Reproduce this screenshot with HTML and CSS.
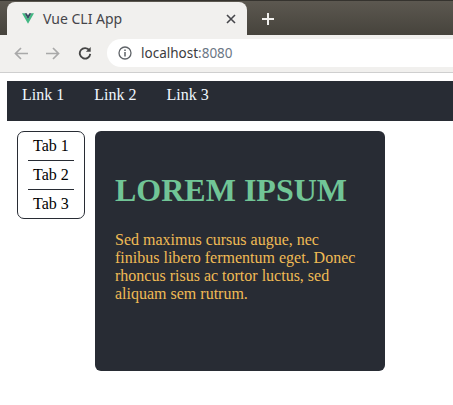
FILE: index.html
```html
<!DOCTYPE html>
<html>
<head>
    <title>Vue CLI App</title>
    <link rel="stylesheet" href="styles.css">
</head>
<body>
    <div class="browser-top">
        <div class="tab">
            <svg class="favicon" width="12" height="11" viewBox="0 0 14 12">
                <path d="M0 0H3L7 7L11 0H14L7 12Z" fill="#42b883"/>
                <path d="M3 0H5.5L7 2.6L8.5 0H11L7 7Z" fill="#35495e"/>
            </svg>
            <span class="tab-title">Vue CLI App</span>
            <svg class="tab-close" width="10" height="10" viewBox="0 0 10 10">
                <path d="M1 1L9 9M9 1L1 9" stroke="#45454a" stroke-width="1.6"/>
            </svg>
        </div>
        <svg class="new-tab" width="12" height="12" viewBox="0 0 12 12">
            <path d="M6 0V12M0 6H12" stroke="#f1f0ee" stroke-width="2"/>
        </svg>
    </div>
    <div class="toolbar">
        <svg class="nav-icon" width="14" height="13" viewBox="0 0 14 13">
            <path d="M14 6.5H1.5M7 1L1.5 6.5L7 12" fill="none" stroke="#a9a9a9" stroke-width="1.7"/>
        </svg>
        <svg class="nav-icon" width="14" height="13" viewBox="0 0 14 13">
            <path d="M0 6.5H12.5M7 1L12.5 6.5L7 12" fill="none" stroke="#a9a9a9" stroke-width="1.7"/>
        </svg>
        <svg class="nav-icon" width="14" height="14" viewBox="0 0 16 16">
            <path d="M13 5A6 6 0 1 0 14 9" fill="none" stroke="#454545" stroke-width="2.1"/>
            <path d="M14.5 1V6.5H9Z" fill="#454545"/>
        </svg>
        <div class="address">
            <svg width="14" height="14" viewBox="0 0 14 14">
                <circle cx="7" cy="7" r="6" fill="none" stroke="#5f6368" stroke-width="1.3"/>
                <path d="M7 6V10.5M7 3.4V5" stroke="#5f6368" stroke-width="1.5"/>
            </svg>
            <span class="host">localhost<span class="port">:8080</span></span>
        </div>
    </div>
    <div class="page">
        <nav class="navbar">
            <a>Link 1</a>
            <a>Link 2</a>
            <a>Link 3</a>
        </nav>
        <div class="content">
            <div class="tabs">
                <div class="tab-item">Tab 1</div>
                <div class="tab-item">Tab 2</div>
                <div class="tab-item">Tab 3</div>
            </div>
            <div class="card">
                <h1>LOREM IPSUM</h1>
                <p>Sed maximus cursus augue, nec finibus libero fermentum eget. Donec rhoncus risus ac tortor luctus, sed aliquam sem rutrum.</p>
            </div>
        </div>
    </div>
</body>
</html>
```

FILE: styles.css
```css
body {
    margin: 0;
    background: white;
    font-family: "Liberation Serif", serif;
    overflow: hidden;
}
.browser-top {
    height: 35px;
    box-sizing: border-box;
    padding-top: 1px;
    border-top: 1px solid #35332e;
    background: linear-gradient(#5c5850, #46433c);
    display: flex;
    align-items: flex-end;
}
.tab {
    width: 240px;
    height: 33px;
    margin-left: 7px;
    padding: 0 11px 0 15px;
    box-sizing: border-box;
    background: #f1f0ee;
    border-radius: 8px 8px 0 0;
    display: flex;
    align-items: center;
}
.favicon {
    margin-right: 9px;
}
.tab-title {
    flex: 1;
    font-family: "Noto Sans", sans-serif;
    font-size: 14px;
    color: #45454a;
}
.new-tab {
    margin: 0 0 10px 15px;
}
.toolbar {
    height: 38px;
    padding: 4px 0 5px 14px;
    box-sizing: border-box;
    background: #f1f0ee;
    border-bottom: 1px solid #cfcfcf;
    display: flex;
    align-items: center;
    gap: 18px;
}
.address {
    flex: 1;
    height: 28px;
    margin-left: -3px;
    padding-left: 11px;
    background: white;
    border-radius: 14px 0 0 14px;
    display: flex;
    align-items: center;
    gap: 9px;
}
.host {
    font-family: "Noto Sans", sans-serif;
    font-size: 13.5px;
    color: #3c3c40;
}
.port {
    color: #6b7785;
}
.page {
    padding: 8px 0 0 7px;
}
.navbar {
    height: 40px;
    padding: 3px 15px 0;
    box-sizing: border-box;
    background: #282c34;
    display: flex;
    gap: 30px;
    font-size: 16px;
    line-height: 22px;
}
.navbar a {
    color: #f0f8ff;
}
.content {
    display: flex;
    align-items: flex-start;
    gap: 10px;
    padding: 10px 0 0 10px;
}
.tabs {
    width: 68px;
    box-sizing: border-box;
    padding: 0 10px;
    border: 1px solid #282c34;
    border-radius: 7px;
    font-size: 16px;
    text-align: center;
    color: black;
}
.tab-item {
    height: 29px;
    line-height: 27px;
    box-sizing: border-box;
    border-bottom: 1px solid #282c34;
}
.tab-item:last-child {
    height: 28px;
    border-bottom: none;
}
.card {
    width: 290px;
    height: 240px;
    box-sizing: border-box;
    padding: 41px 20px 0;
    background: #282c34;
    border-radius: 6px;
}
.card h1 {
    margin: 0 0 23px;
    font-size: 32px;
    line-height: 36px;
    color: #71c596;
}
.card p {
    margin: 0;
    font-size: 16px;
    line-height: 18px;
    color: #f0bb55;
}
```
